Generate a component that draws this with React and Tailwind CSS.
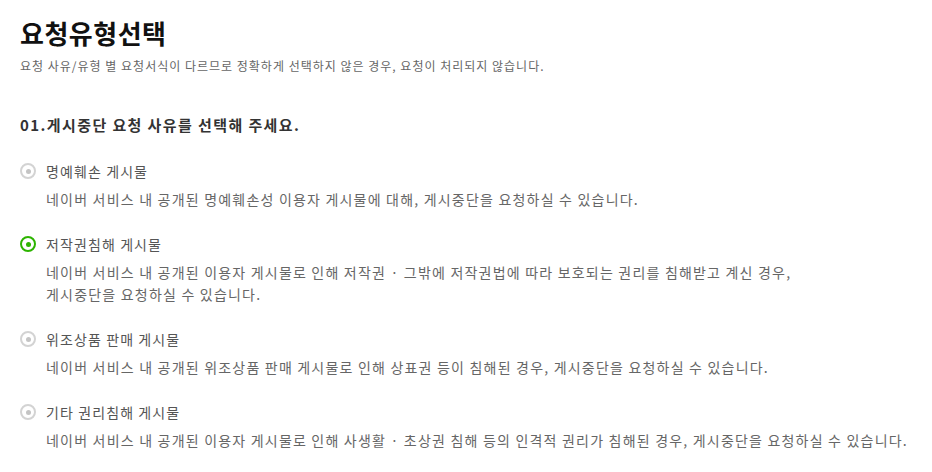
import { useState } from "react";

const OPTIONS = [
  {
    id: "defamation",
    label: "명예훼손 게시물",
    desc: ["네이버 서비스 내 공개된 명예훼손성 이용자 게시물에 대해, 게시중단을 요청하실 수 있습니다."],
  },
  {
    id: "copyright",
    label: "저작권침해 게시물",
    desc: [
      "네이버 서비스 내 공개된 이용자 게시물로 인해 저작권 · 그밖에 저작권법에 따라 보호되는 권리를 침해받고 계신 경우,",
      "게시중단을 요청하실 수 있습니다.",
    ],
  },
  {
    id: "fake",
    label: "위조상품 판매 게시물",
    desc: ["네이버 서비스 내 공개된 위조상품 판매 게시물로 인해 상표권 등이 침해된 경우, 게시중단을 요청하실 수 있습니다."],
  },
  {
    id: "etc",
    label: "기타 권리침해 게시물",
    desc: ["네이버 서비스 내 공개된 이용자 게시물로 인해 사생활 · 초상권 침해 등의 인격적 권리가 침해된 경우, 게시중단을 요청하실 수 있습니다."],
  },
];

function Radio({ checked }) {
  return (
    <span
      className={[
        "flex h-4 w-4 shrink-0 items-center justify-center rounded-full border-2",
        checked ? "border-[#2db400]" : "border-[#d3d3d3]",
      ].join(" ")}
    >
      <span
        className={[
          "h-[5px] w-[5px] rounded-full",
          checked ? "bg-[#2db400]" : "bg-[#c4c4c4]",
        ].join(" ")}
      />
    </span>
  );
}

export default function App() {
  const [selected, setSelected] = useState("copyright");

  return (
    <div className="min-h-screen bg-white pl-5 font-['Noto_Sans_CJK_KR','Noto_Sans',sans-serif]">
      {/* 제목 */}
      <h1 className="pt-[18px] text-[26px] font-bold leading-[30px] tracking-[0.5px] text-[#111]">
        요청유형선택
      </h1>
      <p className="mt-[10px] text-[12px] leading-[16px] tracking-[1px] text-[#666]">
        요청 사유/유형 별 요청서식이 다르므로 정확하게 선택하지 않은 경우, 요청이 처리되지 않습니다.
      </p>

      {/* 01 */}
      <h2 className="mt-[41px] text-[15px] font-bold leading-[20px] tracking-[1.4px] text-[#333]">
        01.게시중단 요청 사유를 선택해 주세요.
      </h2>

      <ul className="mt-[26px] flex flex-col gap-6">
        {OPTIONS.map((o) => (
          <li key={o.id}>
            <label
              className="flex cursor-pointer items-center gap-[10px]"
              onClick={() => setSelected(o.id)}
            >
              <Radio checked={selected === o.id} />
              <span className="text-[14px] leading-[20px] tracking-[1.1px] text-[#555]">{o.label}</span>
            </label>
            <p className="mt-[7px] pl-[26px] text-[14px] leading-[22px] tracking-[1.2px] text-[#666]">
              {o.desc.map((line, i) => (
                <span key={i} className="block">
                  {line}
                </span>
              ))}
            </p>
          </li>
        ))}
      </ul>
    </div>
  );
}
